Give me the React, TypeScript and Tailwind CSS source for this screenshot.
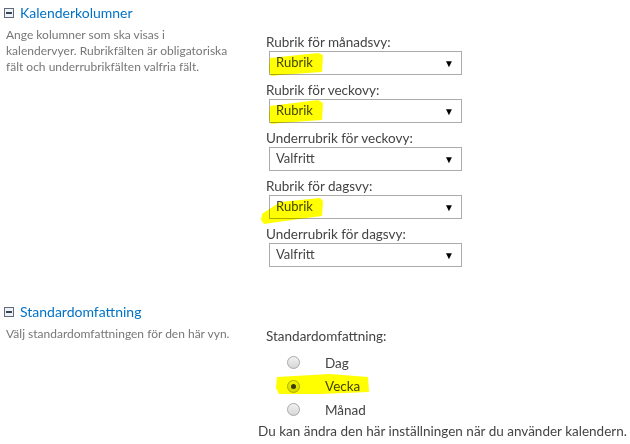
import React from 'react';

const font = { fontFamily: 'Lato, "Open Sans", sans-serif' };

const ToggleIcon = () => (
  <span className="inline-flex w-[10px] h-[10px] border border-[#5f6b7a] bg-[#eef1f5] items-center justify-center">
    <span className="block w-[6px] h-[2px] bg-[#3b4654]" />
  </span>
);

const FakeSelect = ({ value }: { value: string }) => (
  <div className="ml-[3px] w-[193px] h-[24px] border border-[#ababab] bg-white flex items-center justify-between pl-[6px] pr-[7px] text-[13px] text-[#444]">
    <span>{value}</span>
    <span className="text-[10px] text-black">▼</span>
  </div>
);

const Radio = ({ checked, label }: { checked?: boolean; label: string }) => (
  <div className="flex items-center h-[23.5px]">
    <span className="ml-[29px] w-[13px] h-[13px] rounded-full border border-[#a8a8a8] bg-gradient-to-b from-[#f2f2f2] to-[#d6d6d6] flex items-center justify-center">
      {checked && <span className="w-[5px] h-[5px] rounded-full bg-[#3a3a3a]" />}
    </span>
    <span className="ml-[25px] text-[13.5px] text-[#444]">{label}</span>
  </div>
);

const fields = [
  { label: 'Rubrik för månadsvy:', value: 'Rubrik' },
  { label: 'Rubrik för veckovy:', value: 'Rubrik' },
  { label: 'Underrubrik för veckovy:', value: 'Valfritt' },
  { label: 'Rubrik för dagsvy:', value: 'Rubrik' },
  { label: 'Underrubrik för dagsvy:', value: 'Valfritt' },
];

export default function App() {
  return (
    <div className="relative w-[630px] h-[444px] bg-white overflow-hidden" style={font}>
      {/* Kalenderkolumner */}
      <section className="flex">
        <div className="w-[266px] shrink-0">
          <div className="flex items-center gap-[6px] pl-[4px] pt-[2px]">
            <ToggleIcon />
            <span className="text-[14px] text-[#0072c6]">Kalenderkolumner</span>
          </div>
          <p className="pl-[6px] w-[234px] pt-[4px] text-[12px] leading-[16px] text-[#777]">
            Ange kolumner som ska visas i kalendervyer. Rubrikfälten är obligatoriska fält och underrubrikfälten valfria fält.
          </p>
        </div>
        <div className="pt-[33px] flex flex-col">
          {fields.map((f) => (
            <div key={f.label} className="flex flex-col">
              <span className="text-[13.5px] leading-[18px] text-[#444]">{f.label}</span>
              <FakeSelect value={f.value} />
              <div className="h-[6px]" />
            </div>
          ))}
        </div>
      </section>

      {/* Standardomfattning */}
      <section className="flex mt-[28px]">
        <div className="w-[258px] shrink-0">
          <div className="flex items-center gap-[6px] pl-[4px]">
            <ToggleIcon />
            <span className="text-[14px] text-[#0072c6]">Standardomfattning</span>
          </div>
          <p className="pl-[6px] pt-[4px] text-[12px] leading-[16px] text-[#777]">
            Välj standardomfattningen för den här vyn.
          </p>
        </div>
        <div className="pt-[26px]">
          <div className="pl-[8px] text-[13.5px] leading-[18px] text-[#444] mb-[6px]">Standardomfattning:</div>
          <Radio label="Dag" />
          <Radio checked label="Vecka" />
          <Radio label="Månad" />
          <div className="text-[13.5px] leading-[18px] text-[#444] whitespace-nowrap">
            Du kan ändra den här inställningen när du använder kalendern.
          </div>
        </div>
      </section>

      {/* yellow marker highlights */}
      <svg className="absolute inset-0 pointer-events-none mix-blend-multiply" width="630" height="444">
        <g fill="#ffff00">
          <polygon points="270,58 318,53 323,55 322,72 280,75 271,76 269,70" />
          <polygon points="270,106 318,100 323,103 322,120 280,123 271,124 269,118" />
          <polygon points="262,214 280,202 320,198 323,201 322,216 285,221 264,224 261,220" />
          <polygon points="277,377 330,374 368,377 369,392 320,394 279,394 276,388" />
        </g>
      </svg>
    </div>
  );
}
